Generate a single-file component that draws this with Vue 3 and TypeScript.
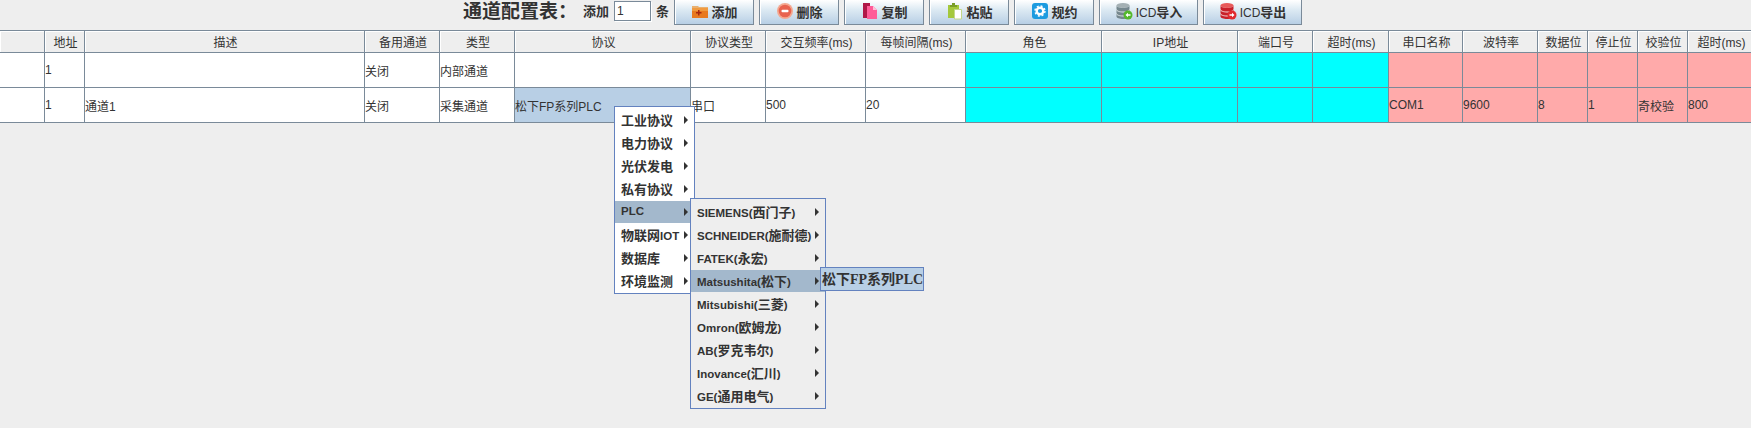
<script setup lang="ts">
interface Col { title: string; width: number; zone?: string }
const columns: Col[] = [
  { title: '', width: 45 },
  { title: '地址', width: 40 },
  { title: '描述', width: 280 },
  { title: '备用通道', width: 75 },
  { title: '类型', width: 75 },
  { title: '协议', width: 176 },
  { title: '协议类型', width: 75 },
  { title: '交互频率(ms)', width: 100 },
  { title: '每帧间隔(ms)', width: 100 },
  { title: '角色', width: 136, zone: 'cyan' },
  { title: 'IP地址', width: 136, zone: 'cyan' },
  { title: '端口号', width: 75, zone: 'cyan' },
  { title: '超时(ms)', width: 76, zone: 'cyan' },
  { title: '串口名称', width: 74, zone: 'pink' },
  { title: '波特率', width: 75, zone: 'pink' },
  { title: '数据位', width: 50, zone: 'pink' },
  { title: '停止位', width: 50, zone: 'pink' },
  { title: '校验位', width: 50, zone: 'pink' },
  { title: '超时(ms)', width: 65, zone: 'pink' },
]
const gridTemplate = columns.map((c) => c.width + 'px').join(' ')
const rows: string[][] = [
  ['', '1', '', '关闭', '内部通道', '', '', '', '', '', '', '', '', '', '', '', '', '', ''],
  ['', '1', '通道1', '关闭', '采集通道', '松下FP系列PLC', '串口', '500', '20', '', '', '', '', 'COM1', '9600', '8', '1', '奇校验', '800'],
]
const buttons = [
  { key: 'add', label: '添加', wide: false },
  { key: 'del', label: '删除', wide: false },
  { key: 'copy', label: '复制', wide: false },
  { key: 'paste', label: '粘贴', wide: false },
  { key: 'rule', label: '规约', wide: false },
  { key: 'import', label: 'ICD导入', wide: true },
  { key: 'export', label: 'ICD导出', wide: true },
]
const menuOne = ['工业协议', '电力协议', '光伏发电', '私有协议', 'PLC', '物联网IOT', '数据库', '环境监测']
const menuTwo = ['SIEMENS(西门子)', 'SCHNEIDER(施耐德)', 'FATEK(永宏)', 'Matsushita(松下)', 'Mitsubishi(三菱)', 'Omron(欧姆龙)', 'AB(罗克韦尔)', 'Inovance(汇川)', 'GE(通用电气)']
function parts(text: string): { text: string; cjk: boolean }[] {
  return (text.match(/[\u4e00-\u9fff]+|[^\u4e00-\u9fff]+/g) ?? []).map((t) => ({ text: t, cjk: /[\u4e00-\u9fff]/.test(t) }))
}
</script>

<template>
  <div class="page">
    <div class="toolbar">
      <span class="title">通道配置表：</span>
      <span class="lab first">添加</span>
      <input class="count" value="1" />
      <span class="lab">条</span>
      <button v-for="b in buttons" :key="b.key" class="btn" :class="{ wide: b.wide }">
        <svg class="ico" width="18" height="18" viewBox="0 0 18 18">
          <template v-if="b.key === 'add'">
            <path d="M1 4h6l1 1h9v3H1z" fill="#e8b070" />
            <path d="M1 6h16v10H1z" fill="#e87a20" />
            <path d="M1 6h16v3H1z" fill="#f09a40" />
            <path d="M5 10h2V8h1.500v2h2v1.500h-2v2H7v-2H5z" fill="#a82a10" />
          </template>
          <template v-else-if="b.key === 'del'">
            <circle cx="9" cy="9" r="8" fill="#f4a890" />
            <circle cx="9" cy="9" r="6.300" fill="#e8634f" />
            <rect x="5.500" y="7.800" width="7" height="2.400" rx="1" fill="#fff" />
          </template>
          <template v-else-if="b.key === 'copy'">
            <path d="M2 1h7v15H2z" fill="#b01848" />
            <path d="M6 4h6l4 4v9H6z" fill="#ff5c98" />
            <path d="M12 4l4 4h-4z" fill="#ffc0d8" />
          </template>
          <template v-else-if="b.key === 'paste'">
            <path d="M2 3h11v13H2z" fill="#a4c83c" />
            <path d="M6 1h3v2h2v2H4V3h2z" fill="#7a9e28" />
            <path d="M8.500 7.500h7v9.500h-7z" fill="#fff" stroke="#c4d88a" />
          </template>
          <template v-else-if="b.key === 'rule'">
            <rect x="1" y="1" width="16" height="16" rx="3" fill="#1c9be0" />
            <circle cx="9" cy="9" r="3.300" fill="none" stroke="#fff" stroke-width="2.400" />
            <circle cx="9" cy="9" r="5" fill="none" stroke="#fff" stroke-width="1.400" stroke-dasharray="2 1.930" />
          </template>
          <template v-else-if="b.key === 'import'">
            <ellipse cx="8" cy="3.500" rx="6.500" ry="2.500" fill="#a4b0b4" />
            <path d="M1.500 3.500v11c0 1.500 3 2.500 6.500 2.500s6.500-1 6.500-2.500v-11c0 1.500-3 2.500-6.500 2.500s-6.500-1-6.500-2.500z" fill="#75878e" />
            <path d="M1.500 7.500c0 1.500 3 2.500 6.500 2.500s6.500-1 6.500-2.500M1.500 11.500c0 1.500 3 2.500 6.500 2.500s6.500-1 6.500-2.500" fill="none" stroke="#dfe6e8" />
            <circle cx="13" cy="13" r="4.500" fill="#54b82c" />
            <path d="M10.500 13l2.500-2.200v1.400h2.500v1.600H13v1.400z" fill="#fff" />
          </template>
          <template v-else>
            <ellipse cx="8" cy="3.500" rx="6.500" ry="2.500" fill="#e85a5a" />
            <path d="M1.500 3.500v11c0 1.500 3 2.500 6.500 2.500s6.500-1 6.500-2.500v-11c0 1.500-3 2.500-6.500 2.500s-6.500-1-6.500-2.500z" fill="#c8202a" />
            <path d="M1.500 7.500c0 1.500 3 2.500 6.500 2.500s6.500-1 6.500-2.500M1.500 11.500c0 1.500 3 2.500 6.500 2.500s6.500-1 6.500-2.500" fill="none" stroke="#f6dada" />
            <circle cx="13" cy="13" r="4.500" fill="#e02a30" />
            <path d="M15.500 13L13 10.800v1.400h-2.500v1.600H13v1.400z" fill="#fff" />
          </template>
        </svg>
        <span><span v-for="p in parts(b.label)" :key="p.text" :class="p.cjk ? 'btn-cjk' : 'btn-latin'">{{ p.text }}</span></span>
      </button>
    </div>

    <div class="table" :style="{ gridTemplateColumns: gridTemplate }">
      <div v-for="(c, i) in columns" :key="'h' + i" class="cell head" :class="{ last: i === columns.length - 1 }">{{ c.title }}</div>
      <template v-for="(row, r) in rows" :key="'r' + r">
        <div
          v-for="(v, i) in row"
          :key="i"
          class="cell body"
          :class="[columns[i].zone, { picked: r === 1 && i === 5, last: i === columns.length - 1 }]"
        >{{ v }}</div>
      </template>
    </div>

    <div class="menu menu-one">
      <div v-for="m in menuOne" :key="m" class="item" :class="{ active: m === 'PLC' }">
        <span class="item-text"><span v-for="p in parts(m)" :key="p.text" :class="p.cjk ? 'cjk' : 'latin'">{{ p.text }}</span></span>
        <i class="arrow"></i>
      </div>
    </div>
    <div class="menu menu-two">
      <div v-for="m in menuTwo" :key="m" class="item" :class="{ active: m.startsWith('Matsushita') }">
        <span class="item-text"><span v-for="p in parts(m)" :key="p.text" :class="p.cjk ? 'cjk' : 'latin'">{{ p.text }}</span></span>
        <i class="arrow"></i>
      </div>
    </div>
    <div class="menu menu-three">松下FP系列PLC</div>
  </div>
</template>

<style>
html, body { margin: 0; background: #eeeeee; }
</style>

<style scoped>
.page {
  position: relative;
  width: 1751px;
  height: 428px;
  overflow: hidden;
  background: #eeeeee;
  color: #333333;
  font-family: "Liberation Sans", "Noto Sans CJK SC", sans-serif;
  font-size: 12px;
}
.toolbar {
  height: 30px;
  box-sizing: border-box;
  display: flex;
  align-items: flex-start;
  padding-left: 463px;
}
.title {
  width: 109px;
  font-size: 19px;
  font-weight: 700;
  line-height: 23px;
  white-space: nowrap;
}
.lab {
  font-size: 13px;
  font-weight: 700;
  line-height: 23px;
  margin-left: 5px;
}
.lab.first { margin-left: 11px; }
.count {
  width: 37px;
  height: 20px;
  box-sizing: border-box;
  margin: 1px 0 0 5px;
  padding: 0 2px;
  border: 1px solid #7a8a99;
  box-shadow: 1px 1px 0 #fff;
  background: #fff;
  color: #333;
  font: 12px "Liberation Sans", sans-serif;
  outline: none;
}
.lab + .btn { margin-left: 5px; }
.btn {
  width: 80px;
  height: 25px;
  box-sizing: border-box;
  margin: 0 5px 0 0;
  padding: 0 0 2px;
  display: flex;
  align-items: center;
  justify-content: center;
  gap: 3px;
  border: 1px solid #7a8a99;
  border-top: none;
  background: linear-gradient(#ffffff, #ddeaf3 40%, #b8cfe5);
  box-shadow: inset 1px 0 0 #fff;
  color: #333333;
  font-family: "Liberation Sans", "Noto Sans CJK SC", sans-serif;
  font-size: 13px;
  font-weight: 700;
}
.btn.wide { width: 99px; }
.btn-latin { font-size: 12px; font-weight: 400; }
.ico { flex: none; }
.table {
  display: grid;
  border-top: 1px solid #7a8a99;
  width: 1751px;
  grid-auto-rows: 35px;
  grid-template-rows: 22px;
}
.cell {
  box-sizing: border-box;
  border-right: 1px solid #7a8a99;
  border-bottom: 1px solid #7a8a99;
  white-space: nowrap;
  overflow: hidden;
  display: flex;
  align-items: center;
}
.cell.last { border-right: none; }
.head {
  justify-content: center;
  padding-left: 2px;
  background: #eeeeee;
  box-shadow: inset 1px 1px 0 #fff;
}
.body { background: #fff; }
.cyan.body { background: #00ffff; }
.pink.body { background: #ffaaaa; }
.picked.body { background: #b8cfe5; }
.menu {
  position: absolute;
  box-sizing: border-box;
  border: 1px solid #6382bf;
  font-weight: 700;
  font-size: 12px;
}
.menu-one {
  left: 614px;
  top: 106px;
  width: 81px;
  padding: 2px 0 1px;
  background: #fff;
  z-index: 1;
}
.menu-two {
  left: 690px;
  top: 198px;
  width: 136px;
  padding: 2px 0 1px;
  background: #eeeeee;
  z-index: 2;
}
.menu-three {
  left: 820px;
  top: 267px;
  width: 104px;
  height: 24px;
  padding: 0 0 2px 1px;
  display: flex;
  align-items: center;
  background: #b8cfe5;
  font-family: "Liberation Serif", "Noto Sans CJK SC", serif;
  font-size: 14px;
  white-space: nowrap;
  z-index: 3;
}
.item {
  height: 22px;
  display: flex;
  align-items: center;
  justify-content: space-between;
  padding: 0 6px 0 6px;
  white-space: nowrap;
}
.item + .item { margin-top: 1px; }
.item.active { background: #a3b8cc; }
.item-text { position: relative; top: -1px; }
.latin { font-size: 11.500px; }
.cjk { font-size: 13px; }
.arrow {
  flex: none;
  width: 0;
  height: 0;
  border-left: 4px solid #333333;
  border-top: 4px solid transparent;
  border-bottom: 4px solid transparent;
}
</style>
